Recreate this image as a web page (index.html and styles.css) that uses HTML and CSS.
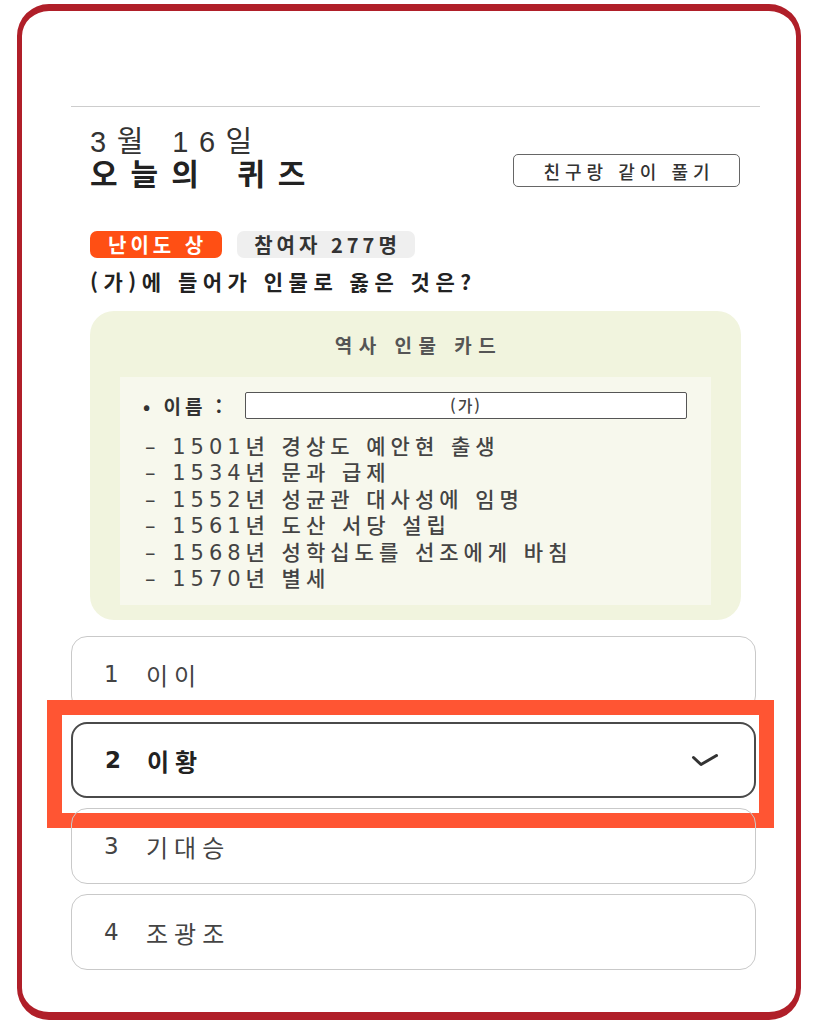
FILE: index.html
```html
<!DOCTYPE html>
<html lang="ko">
<head>
<meta charset="utf-8">
<title>오늘의 퀴즈</title>
<link rel="stylesheet" href="styles.css">
</head>
<body>
<div class="phone">
  <div class="topbar"></div>

  <main class="quiz">
    <header class="quiz-head">
      <div class="quiz-title">
        <p class="quiz-date">3월 16일</p>
        <h1 class="quiz-name">오늘의 퀴즈</h1>
      </div>
      <button class="share-btn" type="button">친구랑 같이 풀기</button>
    </header>

    <div class="tags">
      <span class="tag tag-level">난이도 상</span>
      <span class="tag tag-count">참여자 277명</span>
    </div>

    <p class="question">(가)에 들어가 인물로 옳은 것은?</p>

    <section class="person-card">
      <h2 class="person-card-title">역사 인물 카드</h2>
      <div class="person-card-body">
        <div class="name-row">
          <span class="name-label">• 이름 :</span>
          <span class="name-blank">(가)</span>
        </div>
        <ul class="timeline">
          <li>– 1501년 경상도 예안현 출생</li>
          <li>– 1534년 문과 급제</li>
          <li>– 1552년 성균관 대사성에 임명</li>
          <li>– 1561년 도산 서당 설립</li>
          <li>– 1568년 성학십도를 선조에게 바침</li>
          <li>– 1570년 별세</li>
        </ul>
      </div>
    </section>
  </main>

  <ol class="choices">
    <li class="choice"><span class="choice-num">1</span><span class="choice-text">이이</span></li>
    <li class="choice is-selected">
      <span class="choice-num">2</span><span class="choice-text">이황</span>
      <svg class="choice-check" viewBox="0 0 28 16" aria-hidden="true">
        <polyline points="2.5,5.5 10,12.5 25.5,3.5" />
      </svg>
      <span class="callout"></span>
    </li>
    <li class="choice"><span class="choice-num">3</span><span class="choice-text">기대승</span></li>
    <li class="choice"><span class="choice-num">4</span><span class="choice-text">조광조</span></li>
  </ol>
</div>
</body>
</html>
```

FILE: styles.css
```css
* {
  box-sizing: border-box;
  margin: 0;
  padding: 0;
}

body {
  background: #fff;
  font-family: "Noto Sans CJK KR", sans-serif;
  color: #333;
}

/* device frame */
.phone {
  margin: 4px 0 0 17px;
  width: 784px;
  height: 1016px;
  border: solid #b01f29;
  border-width: 7px 5px 8px;
  border-radius: 32px;
  background: #fff;
}

.topbar {
  height: 96px;
  margin: 0 36px 0 49px;
  border-bottom: 1px solid #cdcdcd;
}

/* quiz header */
.quiz {
  padding: 20px 55px 0 68px;
}

.quiz-head {
  display: flex;
  justify-content: space-between;
  align-items: flex-end;
}

.quiz-date,
.quiz-name {
  font-family: "Liberation Sans", "Noto Sans CJK KR", sans-serif;
}

.quiz-date {
  font-size: 29px;
  line-height: 31px;
  letter-spacing: 10.5px;
  font-weight: 400;
  color: #333;
}

.quiz-name {
  margin-top: 1px;
  font-size: 30px;
  line-height: 31px;
  letter-spacing: 13px;
  word-spacing: 4px;
  font-weight: 700;
  color: #222;
}

.share-btn {
  width: 227px;
  height: 33px;
  margin: 0 1px 3px 0;
  padding: 0 0 0 5px;
  border: 1.5px solid #666;
  border-radius: 5px;
  background: #fff;
  font: inherit;
  font-size: 18px;
  font-weight: 500;
  letter-spacing: 5px;
  color: #333;
}

/* tags */
.tags {
  display: flex;
  gap: 15px;
  margin-top: 41px;
}

.tag {
  height: 27px;
  line-height: 27px;
  border-radius: 7px;
  font-size: 20px;
  font-weight: 700;
  letter-spacing: 4px;
}

.tag-level {
  padding: 0 15px 0 18px;
  background: #ff4f14;
  color: #fff;
}

.tag-count {
  padding: 0 14px 0 17px;
  background: #efefef;
  color: #333;
  letter-spacing: 4px;
}

.question {
  margin-top: 10px;
  font-size: 21px;
  line-height: 26px;
  font-weight: 700;
  letter-spacing: 5.5px;
  color: #222;
}

/* person card */
.person-card {
  margin-top: 17px;
  padding: 22px 30px 15px;
  border-radius: 24px;
  background: #f1f4de;
}

.person-card-title {
  margin-bottom: 20px;
  padding-left: 6px;
  text-align: center;
  font-size: 19px;
  line-height: 24px;
  letter-spacing: 6.5px;
  font-weight: 700;
  color: #555;
}

.person-card-body {
  padding: 15px 24px 13px 23px;
  background: #f7f8ed;
}

.name-row {
  display: flex;
  align-items: center;
}

.name-label {
  flex: 0 0 102px;
  font-size: 19px;
  font-weight: 700;
  letter-spacing: 4px;
  color: #333;
}

.name-blank {
  flex: 1;
  height: 27px;
  border: 1.5px solid #555;
  border-radius: 2px;
  background: #fff;
  text-align: center;
  font-size: 16px;
  line-height: 24px;
  font-weight: 500;
  letter-spacing: 2px;
  color: #444;
}

.timeline {
  list-style: none;
  margin-top: 15px;
  padding-left: 2px;
  font-family: "DejaVu Sans", "Noto Sans CJK KR", sans-serif;
  font-size: 21px;
  line-height: 26.4px;
  letter-spacing: 5px;
  font-weight: 500;
  color: #444;
}

/* answer choices */
.choices {
  list-style: none;
  margin: 16px 40px 0 49px;
  display: flex;
  flex-direction: column;
  gap: 10px;
}

.choice {
  position: relative;
  display: flex;
  align-items: center;
  height: 76px;
  padding: 0 35px 0 32px;
  border: 1.5px solid #c9c9c9;
  border-radius: 16px;
  font-family: "DejaVu Sans", "Noto Sans CJK KR", sans-serif;
  font-size: 23px;
  color: #444;
}

.choice-num {
  width: 42px;
}

.choice-text {
  font-size: 24px;
  letter-spacing: 6px;
}

.choice.is-selected {
  border: 2px solid #4a4a4a;
  font-weight: 700;
  color: #222;
}

.choice-check {
  margin-left: auto;
  width: 28px;
  height: 16px;
  fill: none;
  stroke: #333;
  stroke-width: 3;
  stroke-linecap: round;
  stroke-linejoin: round;
}

/* highlight drawn over the chosen answer */
.callout {
  position: absolute;
  top: -24px;
  left: -26.5px;
  right: -20px;
  bottom: -32px;
  border: 15px solid #ff5533;
  pointer-events: none;
}
```
